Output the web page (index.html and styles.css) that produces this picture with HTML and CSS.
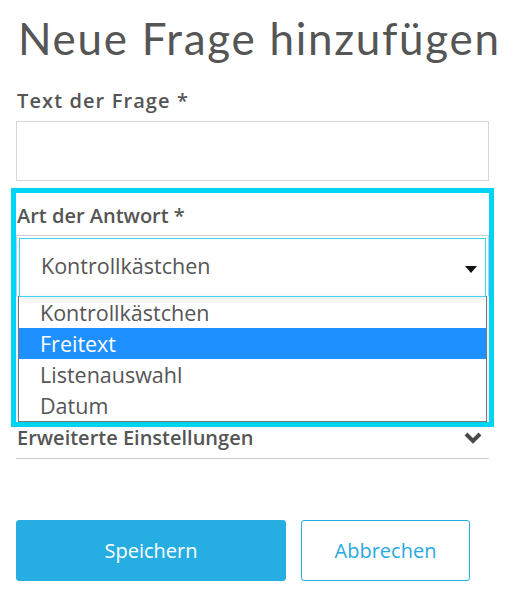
FILE: index.html
```html
<!DOCTYPE html>
<html>
  <head>
    <title>Neue Frage hinzufügen</title>
    <link rel="stylesheet" href="styles.css">
  </head>
  <body>
    <div class="page">
      <h1 class="title">Neue Frage hinzufügen</h1>

      <div class="field">
        <label class="label label-wide">Text der Frage *</label>
        <input type="text" class="text-input" />
      </div>

      <div class="field field-focus">
        <label class="label">Art der Antwort *</label>
        <div class="select">
          <span class="select-value">Kontrollkästchen</span>
          <span class="select-arrow"></span>
        </div>
        <ul class="options">
          <li class="option">Kontrollkästchen</li>
          <li class="option active">Freitext</li>
          <li class="option">Listenauswahl</li>
          <li class="option">Datum</li>
        </ul>
      </div>

      <div class="advanced">
        <span class="advanced-label">Erweiterte Einstellungen</span>
        <svg class="chevron" width="18" height="13" viewBox="0 0 18 13">
          <path d="M2 3 L9 10 L16 3" fill="none" stroke="#4a4a4a" stroke-width="4" />
        </svg>
      </div>

      <div class="actions">
        <button class="btn btn-primary">Speichern</button>
        <button class="btn btn-outline">Abbrechen</button>
      </div>
    </div>
  </body>
</html>
```

FILE: styles.css
```css
body {
  margin: 0;
  background-color: #fff;
  font-family: "Open Sans", sans-serif;
  color: #555;
}
.page {
  width: 473px;
  padding: 0 16px;
}
.title {
  margin: 13px 0 0 2px;
  font-family: Lato, sans-serif;
  font-weight: 400;
  font-size: 44px;
  letter-spacing: 1.7px;
  line-height: 50px;
  color: #555;
  white-space: nowrap;
}
.field {
  margin-top: 24px;
}
.label {
  display: block;
  font-size: 20px;
  font-weight: 600;
  line-height: 27px;
  margin: 0 0 7px 1px;
}
.label-wide {
  letter-spacing: 1.1px;
}
.text-input {
  display: block;
  box-sizing: border-box;
  width: 473px;
  height: 60px;
  border: 1px solid #d6d6d6;
  margin: 0;
}
.field-focus {
  margin-top: 12px;
  padding-top: 9px;
  outline: 5px solid #00d4f5;
}
.field-focus .label {
  margin-bottom: 6px;
}
.select {
  display: flex;
  box-sizing: border-box;
  height: 61px;
  border: 1px solid #d0d0d0;
  border-bottom: none;
  padding: 2px 2px 0;
}
.select-value {
  display: flex;
  align-items: center;
  flex: 1;
  box-sizing: border-box;
  height: 59px;
  border: 1px solid #3dd6f0;
  padding: 0 0 4px 21px;
  font-size: 21.5px;
  color: #555;
  box-shadow: 0 3px 6px rgba(0, 0, 0, 0.08);
}
.select-arrow {
  position: absolute;
  margin: 28px 0 0 446px;
  width: 0;
  height: 0;
  border-left: 6px solid transparent;
  border-right: 6px solid transparent;
  border-top: 7px solid #111;
}
.options {
  list-style: none;
  margin: 0 2px;
  padding: 0;
  border: 1px solid #777;
  box-shadow: 0 2px 8px rgba(0, 0, 0, 0.12);
}
.option {
  height: 31px;
  line-height: 31px;
  padding-left: 21px;
  font-size: 21.5px;
  color: #555;
}
.option.active {
  background-color: #1e90ff;
  color: #fff;
}
.advanced {
  display: flex;
  align-items: center;
  justify-content: space-between;
  margin-top: 2px;
  padding: 0 7px 7px 1px;
  border-bottom: 1px solid #cfcfcf;
}
.advanced-label {
  font-size: 20px;
  font-weight: 600;
  line-height: 27px;
}
.actions {
  display: flex;
  gap: 15px;
  margin-top: 61px;
}
.btn {
  height: 61px;
  font-family: "Open Sans", sans-serif;
  font-size: 20px;
  border-radius: 3px;
  border: 1px solid #26ade2;
}
.btn-primary {
  width: 270px;
  background-color: #26ade2;
  color: #fff;
}
.btn-outline {
  width: 169px;
  background-color: #fff;
  color: #2aa8df;
}
```
